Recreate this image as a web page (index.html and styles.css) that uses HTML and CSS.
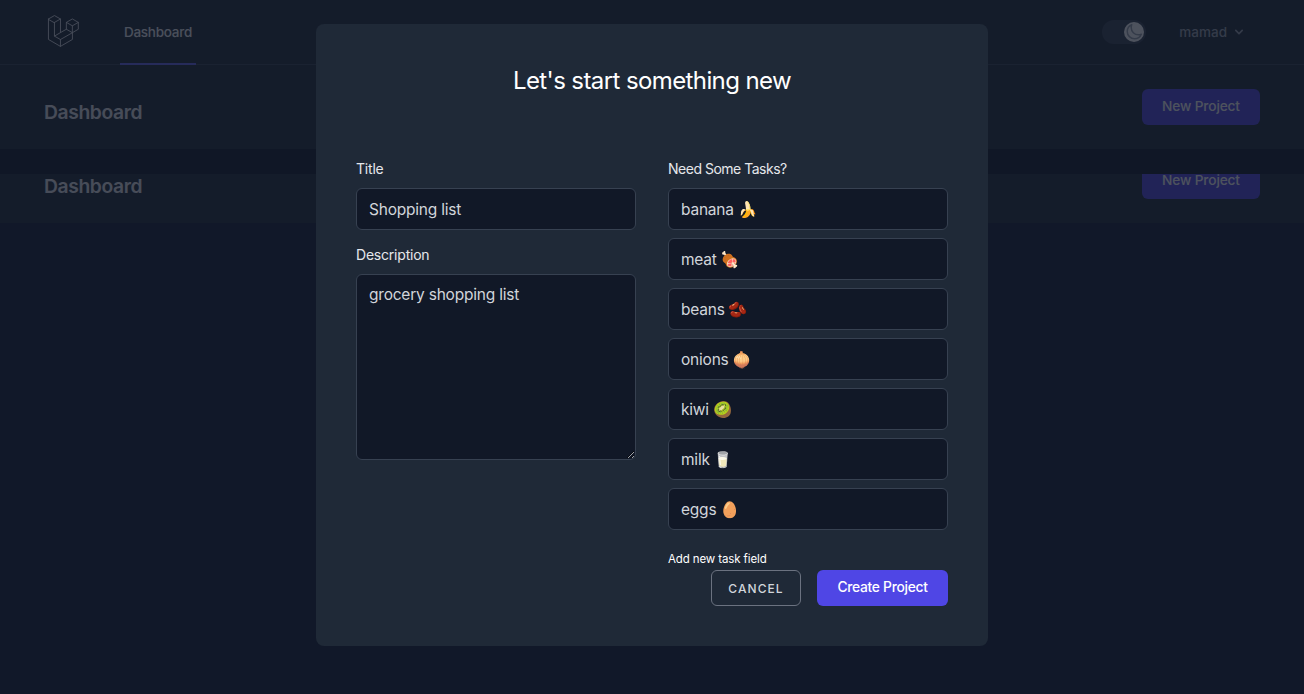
FILE: index.html
```html
<!DOCTYPE html>
<html lang="en">
<head>
<meta charset="utf-8">
<title>Dashboard</title>
<link rel="stylesheet" href="styles.css">
</head>
<body>
<div class="page">
  <nav class="nav">
    <div class="container nav-inner">
      <div class="nav-left">
        <svg class="logo" viewBox="0 0 316 316" fill="none" stroke="currentColor" stroke-width="8" stroke-linejoin="round" stroke-linecap="round">
          <path d="M39 52.6 91.8 22.4l52.8 30.2L91.8 82.8zM39 52.6V232l105.3 61 105.3-61v-59.200M91.800 82.800V203l52.500 30 105.300-60.200M144.300 233v60M144.600 52.600V172L91.800 203M144.600 172l51.700-29.400V82.300L249 52l52.300 30.300L249 112.500 196.300 82.300M249 112.500v60.300l52.300-30.200V82.300M196.300 142.600l52.700 30.200"/>
        </svg>
        <a class="nav-link">Dashboard</a>
      </div>
      <div class="nav-right">
        <span class="toggle">
          <span class="knob">
            <svg viewBox="0 0 24 24" fill="none" stroke="currentColor" stroke-width="2" stroke-linejoin="round"><path d="M21.752 15.002A9.718 9.718 0 0118 15.750c-5.385 0-9.750-4.365-9.750-9.750 0-1.330.266-2.597.748-3.752A9.753 9.753 0 003 11.250C3 16.635 7.365 21 12.750 21a9.753 9.753 0 009.002-5.998z"/></svg>
          </span>
        </span>
        <span class="user">mamad
          <svg class="chev" viewBox="0 0 20 20" fill="currentColor"><path d="M5.293 7.293a1 1 0 011.414 0L10 10.586l3.293-3.293a1 1 0 111.414 1.414l-4 4a1 1 0 01-1.414 0l-4-4a1 1 0 010-1.414z"/></svg>
        </span>
      </div>
    </div>
  </nav>
  <header class="head">
    <div class="container head-inner">
      <h2 class="head-title">Dashboard</h2>
      <button class="new-btn">New Project</button>
    </div>
  </header>
  <div class="strip"></div>
  <div class="head-clip">
    <header class="head head-shift">
      <div class="container head-inner">
        <h2 class="head-title">Dashboard</h2>
        <button class="new-btn">New Project</button>
      </div>
    </header>
  </div>
</div>

<div class="overlay">
  <form class="modal">
    <h1 class="modal-title">Let's start something new</h1>
    <div class="columns">
      <div class="col">
        <label class="label">Title</label>
        <input class="field" value="Shopping list">
        <label class="label label-next">Description</label>
        <textarea class="field area">grocery shopping list</textarea>
      </div>
      <div class="col">
        <label class="label label-tight">Need Some Tasks?</label>
        <div class="tasks">
          <input class="field" value="banana 🍌">
          <input class="field" value="meat 🍖">
          <input class="field" value="beans 🫘">
          <input class="field" value="onions 🧅">
          <input class="field" value="kiwi 🥝">
          <input class="field" value="milk 🥛">
          <input class="field" value="eggs 🥚">
        </div>
        <a class="add-link">Add new task field</a>
      </div>
    </div>
    <div class="actions">
      <button type="button" class="cancel">Cancel</button>
      <button type="button" class="create">Create Project</button>
    </div>
  </form>
</div>
</body>
</html>
```
FILE: styles.css
```css
* { box-sizing: border-box; }
html, body { margin: 0; height: 100%; }
body {
  background: #121b31;
  font-family: Inter, "Liberation Sans", "Noto Color Emoji", sans-serif;
  overflow: hidden;
}
.container { width: 1280px; margin: 0 auto; padding: 0 32px; }
.nav { background: #1f2937; border-bottom: 1px solid #374151; height: 65px; }
.nav-inner { display: flex; justify-content: space-between; height: 64px; }
.nav-left { display: flex; align-items: stretch; }
.logo { width: 36px; height: 36px; color: #e5e7eb; align-self: center; margin-top: -2px; }
.nav-link {
  margin-left: 40px; padding: 1px 4px 0; height: 65px;
  display: flex; align-items: center;
  border-bottom: 2px solid #6366f1;
  color: #f3f4f6; font-size: 13.5px; font-weight: 500; letter-spacing: -.02em;
}
.nav-right { display: flex; align-items: center; }
.toggle { width: 44px; height: 24px; border-radius: 12px; background: #374151; display: flex; justify-content: flex-end; align-items: center; padding-right: 2px; }
.knob { width: 20px; height: 20px; border-radius: 50%; background: #fff; color: #9ca3af; display: flex; align-items: center; justify-content: center; }
.knob svg { width: 18px; height: 18px; }
.user { margin-left: 33px; margin-right: 13px; display: flex; align-items: center; gap: 3px; color: #9ca3af; font-size: 13.5px; font-weight: 500; }
.chev { width: 16px; height: 16px; margin-left: 1px; }
.head { background: #1f2937; height: 84px; }
.head-inner { display: flex; justify-content: space-between; align-items: flex-end; padding-top: 24px; padding-bottom: 24px; }
.head-title { margin: 0 0 -1px; font-size: 19.300px; line-height: 28px; font-weight: 600; color: #e5e7eb; letter-spacing: -.02em; }
.new-btn { width: 118px; height: 36px; border: 0; border-radius: 6px; background: #4f46e5; color: #fff; font: 500 13.700px/12px Inter, sans-serif; letter-spacing: -.01em; padding: 0 0 3px; }
.strip { height: 25px; background: #0f1524; }
.head-clip { height: 49px; overflow: hidden; }
.head-shift { margin-top: -35px; }

.overlay {
  position: fixed; inset: 0;
  background: rgba(17, 24, 39, .75);
  display: flex; justify-content: center; align-items: flex-start;
  padding-top: 24px;
}
.modal {
  width: 672px; height: 622px;
  background: #1f2937; border-radius: 8px;
  padding: 40px;
}
.modal-title { margin: 0 0 63px; height: 32px; line-height: 33px; text-align: center; font-size: 24px; font-weight: 400; color: #fff; letter-spacing: -.025em; }
.columns { display: grid; grid-template-columns: 280px 280px; column-gap: 32px; }
.label { display: block; height: 20px; line-height: 20px; margin-top: 0; margin-bottom: 9px; font-size: 14px; font-weight: 400; color: #e5e7eb; letter-spacing: -.015em; }
.label-next { margin-top: 15px; }
.label-tight { letter-spacing: -.035em; }
.col { display: flex; flex-direction: column; }
.field {
  display: block; width: 280px; height: 42px;
  background: #111827; border: 1px solid #374151; border-radius: 6px;
  padding: 8px 12px; color: #d1d5db;
  font: 400 15.500px/24px Inter, "Noto Color Emoji", sans-serif;
  letter-spacing: -.014em; outline: 0;
}
.area { height: 186px; resize: vertical; }
.tasks { display: flex; flex-direction: column; gap: 8px; }
.add-link { display: block; margin-top: 21px; font-size: 11.500px; line-height: 16px; color: #fff; letter-spacing: -.01em; }
.actions { display: flex; justify-content: flex-end; gap: 16px; margin-top: 3px; }
.cancel { width: 90px; height: 36px; background: transparent; border: 1px solid #6b7280; border-radius: 6px; color: #d1d5db; font: 500 12px Inter, sans-serif; letter-spacing: .09em; text-transform: uppercase; padding: 0; }
.create { width: 131px; height: 36px; background: #4f46e5; border: 0; border-radius: 6px; color: #fff; font: 500 13.800px Inter, sans-serif; letter-spacing: -.02em; padding: 0 0 2px; }
```
